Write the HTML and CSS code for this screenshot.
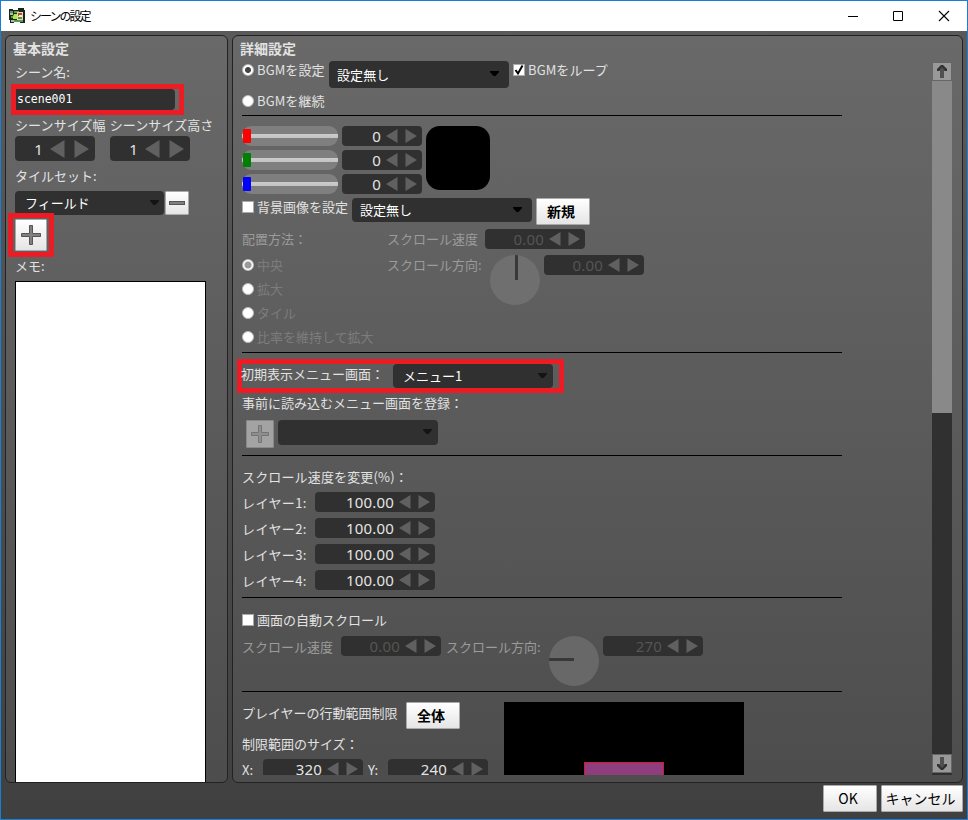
FILE: index.html
```html
<!DOCTYPE html>
<html lang="ja">
<head>
<meta charset="utf-8">
<title>シーンの設定</title>
<link rel="stylesheet" href="styles.css">
</head>
<body>
<svg width="0" height="0" class="defs">
  <symbol id="arrows" viewBox="0 0 31 14"><path d="M11.500 0v14L0 7zM19.500 0v14L31 7z" fill="#606060"/></symbol>
  <symbol id="arrows-lg" viewBox="0 0 39 18"><path d="M14.500 0v18L0 9zM24.500 0v18L39 9z" fill="#606060"/></symbol>
  <symbol id="caret" viewBox="0 0 9 5"><path d="M0 0h9v1L5.500 5h-2L0 1z" fill="currentColor"/></symbol>
  <symbol id="plus" viewBox="0 0 22 22"><path d="M9.500 1.500h3v8h8v3h-8v8h-3v-8h-8v-3h8z" fill="#808080" stroke="#555" stroke-width="1"/></symbol>
  <symbol id="plus-off" viewBox="0 0 20 20"><path d="M8.500 1.500h3v7h7v3h-7v7h-3v-7h-7v-3h7z" fill="#8e8e8e" stroke="#747474" stroke-width="1"/></symbol>
  <symbol id="scroll-arrow" viewBox="0 0 10 13"><path d="M5 0l5 5v1H7v7H3V6H0V5z" fill="#505050"/><path d="M4 0h2l4 4v2H8.500L5 2 1.500 6H0V4z" fill="#303030"/><path d="M5 2L2 6h6z" fill="#505050"/></symbol>
</svg>
<div class="window">
  <header class="titlebar">
    <svg class="app-icon" width="16" height="16" viewBox="0 0 16 16">
      <path d="M0 1h4v1h5V0h6v2h1v13h-5v-1H5v1H1v-3H0z" fill="#17271b"/>
      <path d="M1 3h3v2H1zM5 3h5v2H5zM2 8h3v2H2zM5 12h9v2H5z" fill="#579b50"/>
      <path d="M1 5h3v2H1zM2 12h3v2H2z" fill="#a9bcb0"/>
      <path d="M5 6h3v5H4V8z" fill="#b4e83c"/>
      <path d="M8 4h6v8H8z" fill="#e8d7b0"/>
      <path d="M9 5h4v3H9z" fill="#a45632"/><path d="M10 7h3v2h-3z" fill="#fff0cf"/><path d="M9 9h4v2H9z" fill="#559448"/>
    </svg>
    <span class="title">シーンの設定</span>
    <svg class="controls" width="102" height="12" viewBox="0 0 102 12" fill="none" stroke="#000">
      <path d="M0 6.500h10M45.500 1.500h9v9h-9z"/><path d="M91 1l10 10M101 1L91 11" stroke-width="1.100"/>
    </svg>
  </header>

  <main class="body">
    <section class="panel basic">
      <h2>基本設定</h2>
      <div class="label">シーン名:</div>
      <div class="marker name-marker"><div class="name-field">scene001</div></div>
      <div class="size-labels"><span>シーンサイズ幅</span><span>シーンサイズ高さ</span></div>
      <div class="size-fields">
        <div class="spin large"><span>1</span><svg width="39" height="18"><use href="#arrows-lg"/></svg></div>
        <div class="spin large"><span>1</span><svg width="39" height="18"><use href="#arrows-lg"/></svg></div>
      </div>
      <div class="label tiles-label">タイルセット:</div>
      <div class="tile-row">
        <div class="select dim tile-select"><span>フィールド</span><svg width="9" height="5"><use href="#caret"/></svg></div>
        <div class="button minus"><i></i></div>
      </div>
      <div class="marker plus-marker"><div class="button plus"><svg width="22" height="22"><use href="#plus"/></svg></div></div>
      <div class="label memo-label">メモ:</div>
      <div class="memo"></div>
    </section>

    <section class="panel detail">
      <h2>詳細設定</h2>
      <div class="scroller">
        <div class="content">
          <div class="bgm">
            <div class="option"><i class="radio on"></i>BGMを設定</div>
            <div class="select bgm-select"><span>設定無し</span><svg width="9" height="5"><use href="#caret"/></svg></div>
            <div class="option loop"><i class="check"><svg width="12" height="12" viewBox="0 0 12 12"><path d="M2.500 6l2.500 3.500L9.500 1.500" fill="none" stroke="#000" stroke-width="2"/></svg></i>BGMをループ</div>
          </div>
          <div class="option keep"><i class="radio"></i>BGMを継続</div>
          <hr>
          <div class="color">
            <div class="channels">
              <div class="channel red"><div class="slider"><i></i></div><div class="spin s80"><span>0</span><svg width="31" height="14"><use href="#arrows"/></svg></div></div>
              <div class="channel green"><div class="slider"><i></i></div><div class="spin s80"><span>0</span><svg width="31" height="14"><use href="#arrows"/></svg></div></div>
              <div class="channel blue"><div class="slider"><i></i></div><div class="spin s80"><span>0</span><svg width="31" height="14"><use href="#arrows"/></svg></div></div>
            </div>
            <div class="swatch"></div>
          </div>
          <div class="background">
            <div class="option"><i class="check"></i>背景画像を設定</div>
            <div class="select bg-select"><span>設定無し</span><svg width="9" height="5"><use href="#caret"/></svg></div>
            <div class="button text bold">新規</div>
          </div>
          <div class="placement">
            <div class="modes">
              <div class="label muted">配置方法：</div>
              <div class="option faint"><i class="radio on disabled"></i>中央</div>
              <div class="option faint"><i class="radio"></i>拡大</div>
              <div class="option faint"><i class="radio"></i>タイル</div>
              <div class="option faint"><i class="radio"></i>比率を維持して拡大</div>
            </div>
            <div class="motion">
              <div class="speed"><span class="label muted">スクロール速度</span><div class="spin s100 off"><span>0.00</span><svg width="31" height="14"><use href="#arrows"/></svg></div></div>
              <div class="direction"><span class="label muted">スクロール方向:</span><div class="dial up"></div><div class="spin s100 off"><span>0.00</span><svg width="31" height="14"><use href="#arrows"/></svg></div></div>
            </div>
          </div>
          <hr>
          <div class="marker menu-marker"><span class="label">初期表示メニュー画面：</span><div class="select dim menu-select"><span>メニュー1</span><svg width="9" height="5"><use href="#caret"/></svg></div></div>
          <div class="label preload-label">事前に読み込むメニュー画面を登録：</div>
          <div class="preload">
            <div class="button add-off"><svg width="20" height="20"><use href="#plus-off"/></svg></div>
            <div class="select dim preload-select"><span></span><svg width="9" height="5"><use href="#caret"/></svg></div>
          </div>
          <hr>
          <div class="label layers-label">スクロール速度を変更(%)：</div>
          <div class="layers">
            <div class="layer"><span class="label">レイヤー1:</span><div class="spin s120"><span>100.00</span><svg width="31" height="14"><use href="#arrows"/></svg></div></div>
            <div class="layer"><span class="label">レイヤー2:</span><div class="spin s120"><span>100.00</span><svg width="31" height="14"><use href="#arrows"/></svg></div></div>
            <div class="layer"><span class="label">レイヤー3:</span><div class="spin s120"><span>100.00</span><svg width="31" height="14"><use href="#arrows"/></svg></div></div>
            <div class="layer"><span class="label">レイヤー4:</span><div class="spin s120"><span>100.00</span><svg width="31" height="14"><use href="#arrows"/></svg></div></div>
          </div>
          <hr>
          <div class="option auto-option"><i class="check"></i>画面の自動スクロール</div>
          <div class="auto">
            <span class="label muted">スクロール速度</span><div class="spin s100 off"><span>0.00</span><svg width="31" height="14"><use href="#arrows"/></svg></div>
            <span class="label muted auto-dir">スクロール方向:</span><div class="dial left"></div><div class="spin s100 off"><span>270</span><svg width="31" height="14"><use href="#arrows"/></svg></div>
          </div>
          <hr>
          <div class="limits">
            <div class="limit-form">
              <div class="limit-head"><span class="label">プレイヤーの行動範囲制限</span><div class="button text bold">全体</div></div>
              <div class="label">制限範囲のサイズ：</div>
              <div class="limit-size">
                <span class="label">X:</span><div class="spin s100"><span>320</span><svg width="31" height="14"><use href="#arrows"/></svg></div>
                <span class="label">Y:</span><div class="spin s100"><span>240</span><svg width="31" height="14"><use href="#arrows"/></svg></div>
              </div>
            </div>
            <div class="map"><div class="area"></div></div>
          </div>
        </div>
        <div class="scrollbar">
          <div class="scroll-btn"><svg width="10" height="13"><use href="#scroll-arrow"/></svg></div>
          <div class="thumb"></div>
          <div class="scroll-btn end"><svg width="10" height="13"><use href="#scroll-arrow"/></svg></div>
        </div>
      </div>
    </section>
  </main>
  <footer>
    <div class="button text">OK</div>
    <div class="button text cancel">キャンセル</div>
  </footer>
</div>
</body>
</html>
```

FILE: styles.css
```css
* { box-sizing: border-box; }
body {
  margin: 0;
  font: 13px/20px "Noto Sans CJK JP", sans-serif;
  color: #e2e2e2;
  white-space: nowrap;
}
.defs { position: absolute; }
svg { display: block; flex: none; }

.window {
  width: 968px;
  height: 820px;
  border: 1px solid #1a7fd4;
  display: flex;
  flex-direction: column;
  overflow: hidden;
  background: linear-gradient(#5a5a5a 30px, #404040);
}
.titlebar {
  height: 30px;
  flex: none;
  display: flex;
  align-items: center;
  background: #fff;
  color: #000;
  padding: 0 17px 0 8px;
}
.title {
  font-size: 12px;
  margin-left: 5px;
  width: 62px;
  letter-spacing: -2px;
}
.controls { margin-left: auto; margin-top: -1px; }

.body { display: flex; gap: 4px; padding: 4px 4px 0; height: 752px; flex: none; }
.panel {
  border: 1px solid #222;
  border-radius: 6px;
  background: linear-gradient(#696969, #4d4d4d);
  overflow: hidden;
}
.basic { width: 223px; padding: 2px 0 0 9px; display: flex; flex-direction: column; }
.detail { width: 731px; padding: 2px 0 0 9px; }
h2 { margin: 0; font-size: 14px; line-height: 20px; height: 20px; }
.basic h2 { margin-left: -2px; flex: none; }
.detail h2 { margin-left: -2px; height: 19px; }
.label { height: 20px; flex: none; display: block; }
.muted { color: #9b9b9b; }
.faint { color: #7c7c7c; }

.marker { border: 5px solid #ed1c24; flex: none; }
.name-marker { margin: 2px 0 0 -4px; width: 173px; height: 31px; }
.basic > .label { height: 20px; margin-top: 4px; }
.name-field {
  width: 159px;
  height: 21px;
  border-radius: 0 4px 4px 0;
  background: #303030;
  color: #fff;
  font: 11.500px/20px "DejaVu Sans Mono", monospace;
  padding-left: 1px;
}
.size-labels { display: flex; gap: 4px; height: 20px; flex: none; letter-spacing: .1px; }
.size-fields { display: flex; gap: 15px; margin-top: 1px; }
.spin {
  height: 20px;
  background: #303030;
  border-radius: 4px;
  display: flex;
  justify-content: flex-end;
  align-items: flex-start;
  padding: 3px 5px 0 0;
  gap: 5px;
  color: #e4e4e4;
  flex: none;
}
.spin span { font: 15px/20px "Noto Sans", sans-serif; margin-top: -3px; letter-spacing: .2px; }
.spin.off span { color: #555; }
.s80 { width: 80px; }
.s100 { width: 100px; }
.s120 { width: 120px; }
.spin.large { width: 80px; height: 25px; padding: 4px 6px 0 0; gap: 7px; }
.spin.large span { margin-top: -1px; }
.basic > .tiles-label { margin-top: 5px; }
.tile-row { display: flex; margin-top: 5px; height: 22px; gap: 1px; }
.select {
  background: #303030;
  border-radius: 4px;
  color: #fff;
  display: flex;
  justify-content: space-between;
  align-items: center;
  padding: 0 10px 0 8px;
  flex: none;
}
.select svg { color: #000; margin-top: -2px; }
.select.dim svg { color: #141414; }
.tile-select { width: 149px; height: 24px; padding: 0 5px 0 10px; }
.button {
  background: linear-gradient(#fff, #e5e5e5);
  border: 1px solid #aaa;
  border-radius: 1px;
  color: #000;
  display: flex;
  align-items: center;
  justify-content: center;
  flex: none;
}
.button.text { font-size: 14px; width: 54px; height: 27px; padding: 0 4px 2px 0; }
.bold { font-weight: 700; }
.minus { width: 24px; height: 24px; }
.minus i { width: 16px; height: 4px; background: #808080; border: 1px solid #555; }
.plus-marker { width: 46px; height: 44px; margin: 0 0 0 -7px; padding: 1px 0 0 2px; }
.plus { width: 32px; height: 32px; }
.basic > .memo-label { margin-top: -1px; }
.memo { margin-top: 5px; width: 191px; height: 520px; flex: none; background: #fff; border: 1px solid #000; }

.scroller { display: flex; height: 718px; overflow: hidden; margin-left: -5px; padding-left: 5px; }
.content { width: 690px; flex: none; }
hr { width: 600px; height: 1px; margin: 0; border: 0; background: #000; }
.option { display: flex; align-items: center; height: 20px; flex: none; }
.radio {
  width: 12px;
  height: 12px;
  border-radius: 50%;
  background: #fff;
  margin-right: 3px;
  border: 1px solid #bbb;
  flex: none;
}
.radio.on { background: radial-gradient(circle, #444 2.500px, #fff 3.500px); }
.radio.disabled { background: radial-gradient(circle, #999 3px, #fff 4px); }
.check { width: 12px; height: 12px; background: #fff; border: 1px solid #aaa; margin-right: 3px; flex: none; }
.check svg { margin: -1px; }

.bgm { display: flex; height: 34px; padding-top: 3px; letter-spacing: .1px; }
.bgm .option:first-child { width: 87px; }
.bgm-select { width: 180px; height: 27px; margin-top: 1px; }
.loop { margin-left: 4px; }
.keep { margin-bottom: 4px; letter-spacing: .1px; }
.color { display: flex; gap: 4px; height: 82px; padding-top: 10px; }
.channels { display: flex; flex-direction: column; gap: 4px; }
.channel { display: flex; gap: 4px; }
.slider {
  width: 96px;
  height: 20px;
  border-radius: 9px;
  background: linear-gradient(transparent 8px, #ccc 8px, #c3c3c3 12px, transparent 12px), #7f7f7f;
  display: flex;
  align-items: center;
  padding-left: 1px;
}
.slider i { width: 8px; height: 14px; border-radius: 1px; }
.red i { background: #f00; }
.green i { background: #008000; }
.blue i { background: #00f; }
.swatch { width: 64px; height: 64px; border-radius: 14px; background: #000; }
.background { display: flex; height: 31px; }
.background .option { width: 110px; margin-top: -1px; }
.bg-select { width: 180px; height: 24px; margin-right: 4px; }
.placement { display: flex; height: 123px; }
.modes { width: 145px; }
.modes .label { height: 24px; }
.modes .option { height: 24px; }
.speed, .direction { display: flex; }
.speed { height: 26px; }
.speed .label { width: 98px; }
.direction .label { width: 103px; }
.direction .spin { margin-left: 4px; }
.dial { width: 50px; height: 50px; border-radius: 50%; flex: none; background: #6f6f6f; }
.dial.up { background: linear-gradient(#383838, #383838) 25px 0 / 3px 25px no-repeat #6f6f6f; }
.dial.left { background: linear-gradient(#383838, #383838) 0 22px / 25px 3px no-repeat #686868; }

.menu-marker { display: flex; width: 327px; height: 34px; margin: 6px 0 0 -5px; }
.menu-marker .label { width: 151px; margin-left: -1px; margin-right: 1px; }
.menu-select { width: 160px; height: 24px; padding: 0 6px 0 10px; }
.preload-label { height: 27px; }
.preload { display: flex; gap: 4px; height: 35px; padding-left: 4px; }
.add-off { width: 28px; height: 28px; background: #a3a3a3; border-color: #888; }
.preload-select { width: 160px; height: 25px; padding-right: 6px; }
.layers-label { margin-top: 11px; height: 25px; letter-spacing: .15px; }
.layers { display: flex; flex-direction: column; gap: 6px; height: 105px; }
.layer { display: flex; height: 20px; }
.layer .label { width: 73px; margin-top: 1px; letter-spacing: .4px; }
.auto-option { margin: 12px 0 6px; }
.auto { display: flex; height: 55px; }
.auto .label { width: 99px; margin-top: 1px; }
.auto .auto-dir { width: 103px; margin-left: 5px; }
.auto .dial { margin-right: 4px; }
.limits { display: flex; padding-top: 10px; }
.limit-form { width: 262px; }
.limit-head { display: flex; height: 32px; }
.limit-head .label { width: 164px; margin-top: 1px; }
.limit-size { display: flex; margin-top: 5px; }
.limit-size .label { width: 21px; margin-top: 1px; }
.limit-size .spin + .label { width: 20px; margin-left: 5px; }
.map { width: 240px; height: 200px; background: #000; padding: 60px 0 0 80px; }
.area { width: 80px; height: 60px; background: #8e3e7e; border: 1px solid #d01838; }
.scrollbar {
  width: 20px;
  height: 713px;
  margin-top: 5px;
  background: #303030;
  display: flex;
  flex-direction: column;
  align-items: center;
}
.scroll-btn {
  width: 20px;
  height: 19px;
  background: #999;
  border: 1px solid #666;
  display: flex;
  align-items: center;
  justify-content: center;
  flex: none;
}
.thumb { width: 20px; height: 332px; background: #898989; }
.end { margin: auto 0 2px; }
.end svg { transform: rotate(180deg); }
footer { display: flex; justify-content: flex-end; gap: 4px; padding: 2px 4px 0 0; }
.button.cancel { width: 82px; padding: 0 3px 2px 0; }
```
